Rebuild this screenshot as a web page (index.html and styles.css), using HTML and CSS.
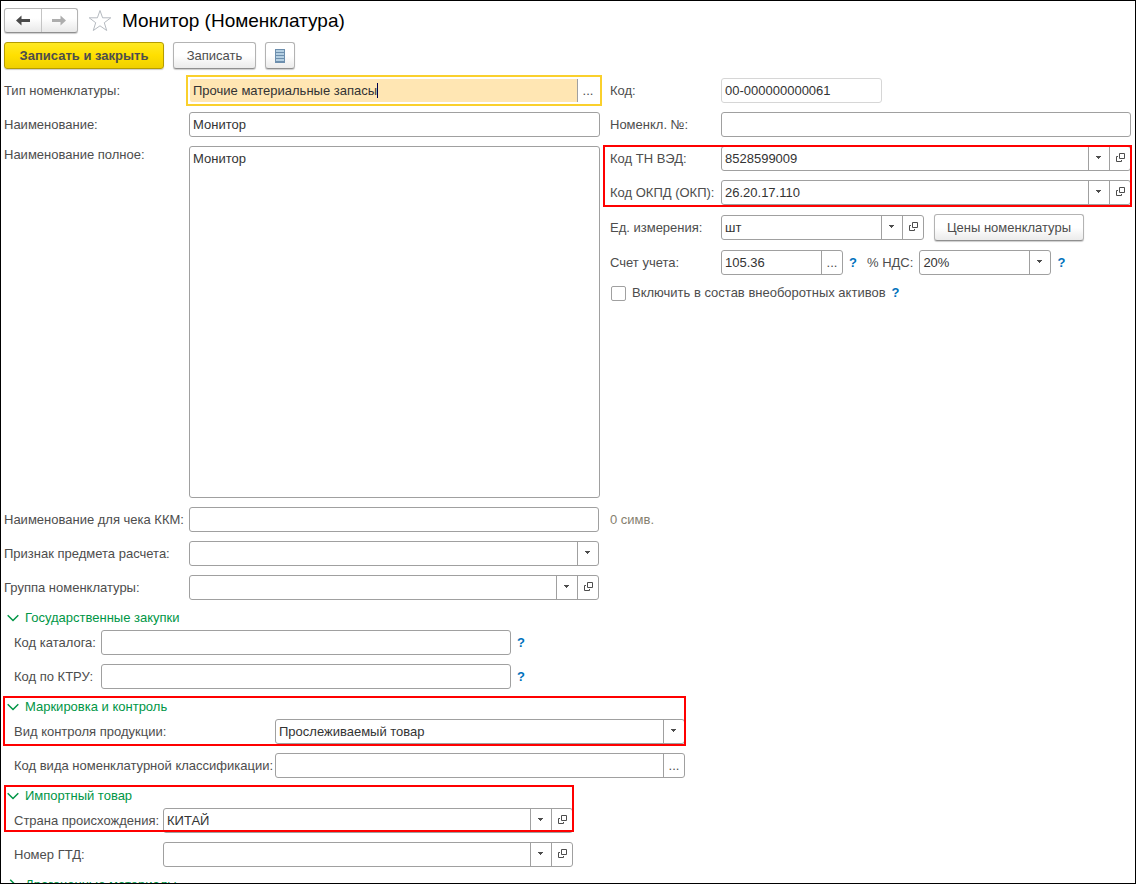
FILE: index.html
```html
<!DOCTYPE html>
<html lang="ru">
<head>
<meta charset="utf-8">
<title>Монитор (Номенклатура)</title>
<link rel="stylesheet" href="styles.css">
</head>
<body>
<svg class="sprite" aria-hidden="true">
  <symbol id="open" viewBox="0 0 9 9"><path d="M3.500 .5h5v5h-5zM2 3.500H.5v5h5V7" fill="none" stroke="#4d4d4d"/></symbol>
  <symbol id="arrow" viewBox="0 0 5 3"><path d="M0 0h5v1H4v1H3v1H2V2H1V1H0z" fill="#4d4d4d"/></symbol>
  <symbol id="down" viewBox="0 0 12 8"><path d="M.7 1.200L6 6.500l5.300-5.300" fill="none" stroke="#009646" stroke-width="1.500"/></symbol>
  <symbol id="right" viewBox="0 0 12 12"><path d="M3.200.7L8.500 6l-5.300 5.300" fill="none" stroke="#009646" stroke-width="1.500"/></symbol>
</svg>
<main class="window">
  <header class="titlebar">
    <div class="history">
      <button type="button" aria-label="Назад"><svg width="14" height="11" viewBox="0 0 14 11"><path d="M0 5.500L5.500 .5V4H14v3H5.500v3.500z" fill="#4a4a4a"/></svg></button>
      <button type="button" aria-label="Вперед"><svg width="14" height="11" viewBox="0 0 14 11"><path d="M14 5.500L8.500 .5V4H0v3h8.500v3.500z" fill="#adadad"/></svg></button>
    </div>
    <button type="button" class="star" aria-label="В избранное"><svg width="24" height="23" viewBox="0 0 24 23"><path d="M12 1.500l2.600 7.300h8.200l-6.500 4.900 2.400 7.800-6.700-4.700-6.700 4.700 2.400-7.800L1.200 8.800h8.200z" fill="#fff" stroke="#b5bac0"/></svg></button>
    <h1>Монитор (Номенклатура)</h1>
  </header>
  <div class="commands">
    <button type="button" class="btn primary">Записать и закрыть</button>
    <button type="button" class="btn save">Записать</button>
    <button type="button" class="btn list" aria-label="Список"><svg width="10" height="14" viewBox="0 0 10 14"><path d="M0 0h10v14H0z" fill="#6d8fae"/><path d="M1 2h8M1 5h8M1 8h8M1 11h8" stroke="#b4cfe2" stroke-width="2"/></svg></button>
  </div>
  <div class="columns">
    <section class="stack main-labels">
      <div class="row"><label for="type">Тип номенклатуры:</label><div class="field active"><input id="type" value="Прочие материальные запасы"><span class="caret"></span><button type="button" aria-label="Выбрать">...</button></div></div>
      <div class="row"><label for="name">Наименование:</label><div class="field"><input id="name" value="Монитор"></div></div>
      <div class="row tall"><label for="full">Наименование полное:</label><textarea id="full">Монитор</textarea></div>
    </section>
    <section class="stack side-labels">
      <div class="row"><label for="code">Код:</label><div class="field code"><input id="code" value="00-000000000061" readonly></div></div>
      <div class="row"><label for="num">Номенкл. №:</label><div class="field"><input id="num"></div></div>
      <div class="stack marked codes">
        <div class="row"><label for="tn">Код ТН ВЭД:</label><div class="field"><select id="tn"><option>8528599009</option></select><span class="drop"><svg><use href="#arrow"/></svg></span><button type="button" aria-label="Открыть"><svg><use href="#open"/></svg></button></div></div>
        <div class="row"><label for="okpd">Код ОКПД (ОКП):</label><div class="field"><select id="okpd"><option>26.20.17.110</option></select><span class="drop"><svg><use href="#arrow"/></svg></span><button type="button" aria-label="Открыть"><svg><use href="#open"/></svg></button></div></div>
      </div>
      <div class="row spaced"><label for="unit">Ед. измерения:</label><div class="field unit"><select id="unit"><option>шт</option></select><span class="drop"><svg><use href="#arrow"/></svg></span><button type="button" aria-label="Открыть"><svg><use href="#open"/></svg></button></div><button type="button" class="btn prices">Цены номенклатуры</button></div>
      <div class="row spaced"><label for="acc">Счет учета:</label><div class="field account"><input id="acc" value="105.36"><button type="button" aria-label="Выбрать">...</button></div><button type="button" class="help">?</button><label class="vat-label" for="vat">% НДС:</label><div class="field vat"><select id="vat"><option>20%</option></select><span class="drop"><svg><use href="#arrow"/></svg></span></div><button type="button" class="help">?</button></div>
      <div class="check"><input type="checkbox" id="assets"><label for="assets">Включить в состав внеоборотных активов</label><button type="button" class="help">?</button></div>
    </section>
  </div>
  <section class="stack main-labels lower">
    <div class="row"><label for="kkm">Наименование для чека ККМ:</label><div class="field std"><input id="kkm"></div><span class="count">0 симв.</span></div>
    <div class="row"><label for="sign">Признак предмета расчета:</label><div class="field std"><select id="sign"><option></option></select><span class="drop"><svg><use href="#arrow"/></svg></span></div></div>
    <div class="row"><label for="group">Группа номенклатуры:</label><div class="field std"><select id="group"><option></option></select><span class="drop"><svg><use href="#arrow"/></svg></span><button type="button" aria-label="Открыть"><svg><use href="#open"/></svg></button></div></div>
  </section>
  <section class="group procurement">
    <h2><button type="button"><svg><use href="#down"/></svg>Государственные закупки</button></h2>
    <div class="row"><label for="cat">Код каталога:</label><div class="field std"><input id="cat"></div><button type="button" class="help">?</button></div>
    <div class="row"><label for="ktru">Код по КТРУ:</label><div class="field std"><input id="ktru"></div><button type="button" class="help">?</button></div>
  </section>
  <section class="group marking">
    <div class="marked control">
      <h2><button type="button"><svg><use href="#down"/></svg>Маркировка и контроль</button></h2>
      <div class="row"><label for="kind">Вид контроля продукции:</label><div class="field std"><select id="kind"><option>Прослеживаемый товар</option></select><span class="drop"><svg><use href="#arrow"/></svg></span></div></div>
    </div>
    <div class="row"><label for="class">Код вида номенклатурной классификации:</label><div class="field std"><input id="class"><button type="button" aria-label="Выбрать">...</button></div></div>
  </section>
  <section class="group import">
    <div class="marked origin">
      <h2><button type="button"><svg><use href="#down"/></svg>Импортный товар</button></h2>
      <div class="row"><label for="country">Страна происхождения:</label><div class="field std"><select id="country"><option>КИТАЙ</option></select><span class="drop"><svg><use href="#arrow"/></svg></span><button type="button" aria-label="Открыть"><svg><use href="#open"/></svg></button></div></div>
    </div>
    <div class="row"><label for="gtd">Номер ГТД:</label><div class="field std"><select id="gtd"><option></option></select><span class="drop"><svg><use href="#arrow"/></svg></span><button type="button" aria-label="Открыть"><svg><use href="#open"/></svg></button></div></div>
  </section>
  <section class="group closed">
    <h2><button type="button"><svg><use href="#right"/></svg>Драгоценные материалы</button></h2>
  </section>
</main>
</body>
</html>
```
FILE: styles.css
```css
* { box-sizing: border-box; }
body { margin: 0; background: #fff; }
body, button, input, select, textarea {
  font-family: "Liberation Sans", Arial, sans-serif;
  font-size: 13px;
  line-height: 16px;
  color: #4d4d4d;
}
h1, h2 { margin: 0; font-weight: normal; }
button { padding: 0; border: 0; background: none; }
svg { display: block; }
.sprite { position: absolute; width: 0; height: 0; }

.window {
  height: 100vh;
  overflow: hidden;
  border: 1px solid #000;
  padding: 7px 4px 0 3px;
}

.titlebar { display: flex; align-items: center; height: 25px; }
.history {
  display: flex;
  width: 74px;
  height: 25px;
  border: 1px solid #b3b3b3;
  border-bottom-color: #8f8f8f;
  border-radius: 3px;
  background: linear-gradient(#fff 40%, #e8e8e8);
  box-shadow: 0 1px 1px #ccc;
}
.history button { flex: 1; display: grid; place-items: center; }
.history button + button { border-left: 1px solid #c4c4c4; }
.star { margin: 0 10px 0 10px; }
h1 { font-size: 19px; line-height: 24px; color: #000; }

.commands { display: flex; gap: 9px; margin-top: 9px; }
.btn {
  height: 27px;
  border: 1px solid #b3b3b3;
  border-bottom-color: #8f8f8f;
  border-radius: 3px;
  background: linear-gradient(#fff 50%, #ebebeb);
  box-shadow: 0 1px 1px #ccc;
  white-space: nowrap;
}
.primary {
  width: 160px;
  border-color: #b59c00;
  background: linear-gradient(#ffe924, #ffdf00 50%, #efd000);
  font-weight: bold;
}
.save { width: 83px; }
.list { width: 30px; display: grid; place-items: center; }
.prices { width: 150px; margin-left: 10px; }

.columns {
  display: grid;
  grid-template-columns: minmax(0, 596fr) minmax(0, 521fr);
  gap: 10px;
  margin-top: 9px;
}
.stack { display: flex; flex-direction: column; gap: 9px; }
.lower { margin-top: 9px; }

.row { display: flex; align-items: center; height: 25px; }
.row > label { flex: none; white-space: nowrap; }
.main-labels .row > label:first-child { width: 185px; }
.side-labels .row > label:first-child { width: 111px; }
.row.tall { height: 352px; align-items: flex-start; }
.spaced { margin-top: 1px; }

.field {
  display: flex;
  flex: 1;
  min-width: 0;
  height: 25px;
  border: 1px solid #a0a0a0;
  border-radius: 3px;
  background: #fff;
}
.field input, .field select {
  flex: 1;
  min-width: 0;
  width: 0;
  padding: 0 3px;
  border: 0;
  outline: 0;
  background: none;
  color: #333;
  appearance: none;
}
.field select { margin-right: -21px; padding-right: 24px; }
.field button, .drop {
  display: grid;
  place-items: center;
  flex: none;
  width: 21px;
  border-left: 1px solid #a0a0a0;
}
.drop { padding-right: 2px; pointer-events: none; }
.drop svg { width: 5px; height: 3px; margin-bottom: 2px; }
.field button svg { width: 9px; height: 9px; margin-bottom: 2px; }
.field.std { flex: 0 1 auto; width: 410px; }
.field.code { flex: 0 1 161px; border-color: #d6d6d6; }
.field.unit { flex: 0 1 203px; }
.field.account { flex: 0 1 122px; }
.field.vat { flex: 0 1 132px; }
.field.active {
  position: relative;
  margin-right: 1px;
  border-color: #fff;
  border-radius: 0;
  outline: 2px solid #fad02c;
  outline-offset: 1px;
}
.active input { background: #ffe6b3; border-radius: 2px 0 0 2px; }
.caret {
  position: absolute;
  left: 187px;
  top: 4px;
  width: 1px;
  height: 15px;
  background: #00004d;
}
textarea {
  flex: 1;
  height: 352px;
  padding: 4px 3px;
  border: 1px solid #a0a0a0;
  border-radius: 3px;
  outline: 0;
  resize: none;
  color: #333;
}
.row.tall label { line-height: 18px; }

.help { margin-left: 5px; width: 10px; color: #0071bc; font-weight: bold; }
.vat-label { margin: 0 6px 0 9px; }
.check { display: flex; align-items: center; height: 18px; }
.check input {
  appearance: none;
  width: 15px;
  height: 15px;
  margin: 0 6px 0 1px;
  border: 1px solid #a0a0a0;
  border-radius: 2px;
}
.count { margin-left: 11px; color: #85806f; }

.group .row { padding-left: 10px; }
.group .row + .row, .group .marked + .row { margin-top: 9px; }
.group h2 { height: 30px; padding-top: 10px; font-size: 13px; line-height: 16px; }
.group h2 button { display: flex; align-items: center; gap: 6px; padding-left: 3px; color: #009646; }
.group h2 svg { width: 12px; height: 8px; }
.group.closed h2 svg { width: 12px; height: 12px; }
.procurement .row > label { width: 87px; }
.marking .row > label { width: 261px; }
.import .row > label { width: 149px; }

.marked { position: relative; width: fit-content; }
.codes { width: auto; }
.marked::after {
  content: "";
  position: absolute;
  border: 2px solid #f00;
  pointer-events: none;
}
.codes::after { inset: -1px -1px -2px -7px; }
.control::after { inset: 7px -1px -2px -1px; }
.origin::after { inset: 7px -1px 1px 0; }
```
